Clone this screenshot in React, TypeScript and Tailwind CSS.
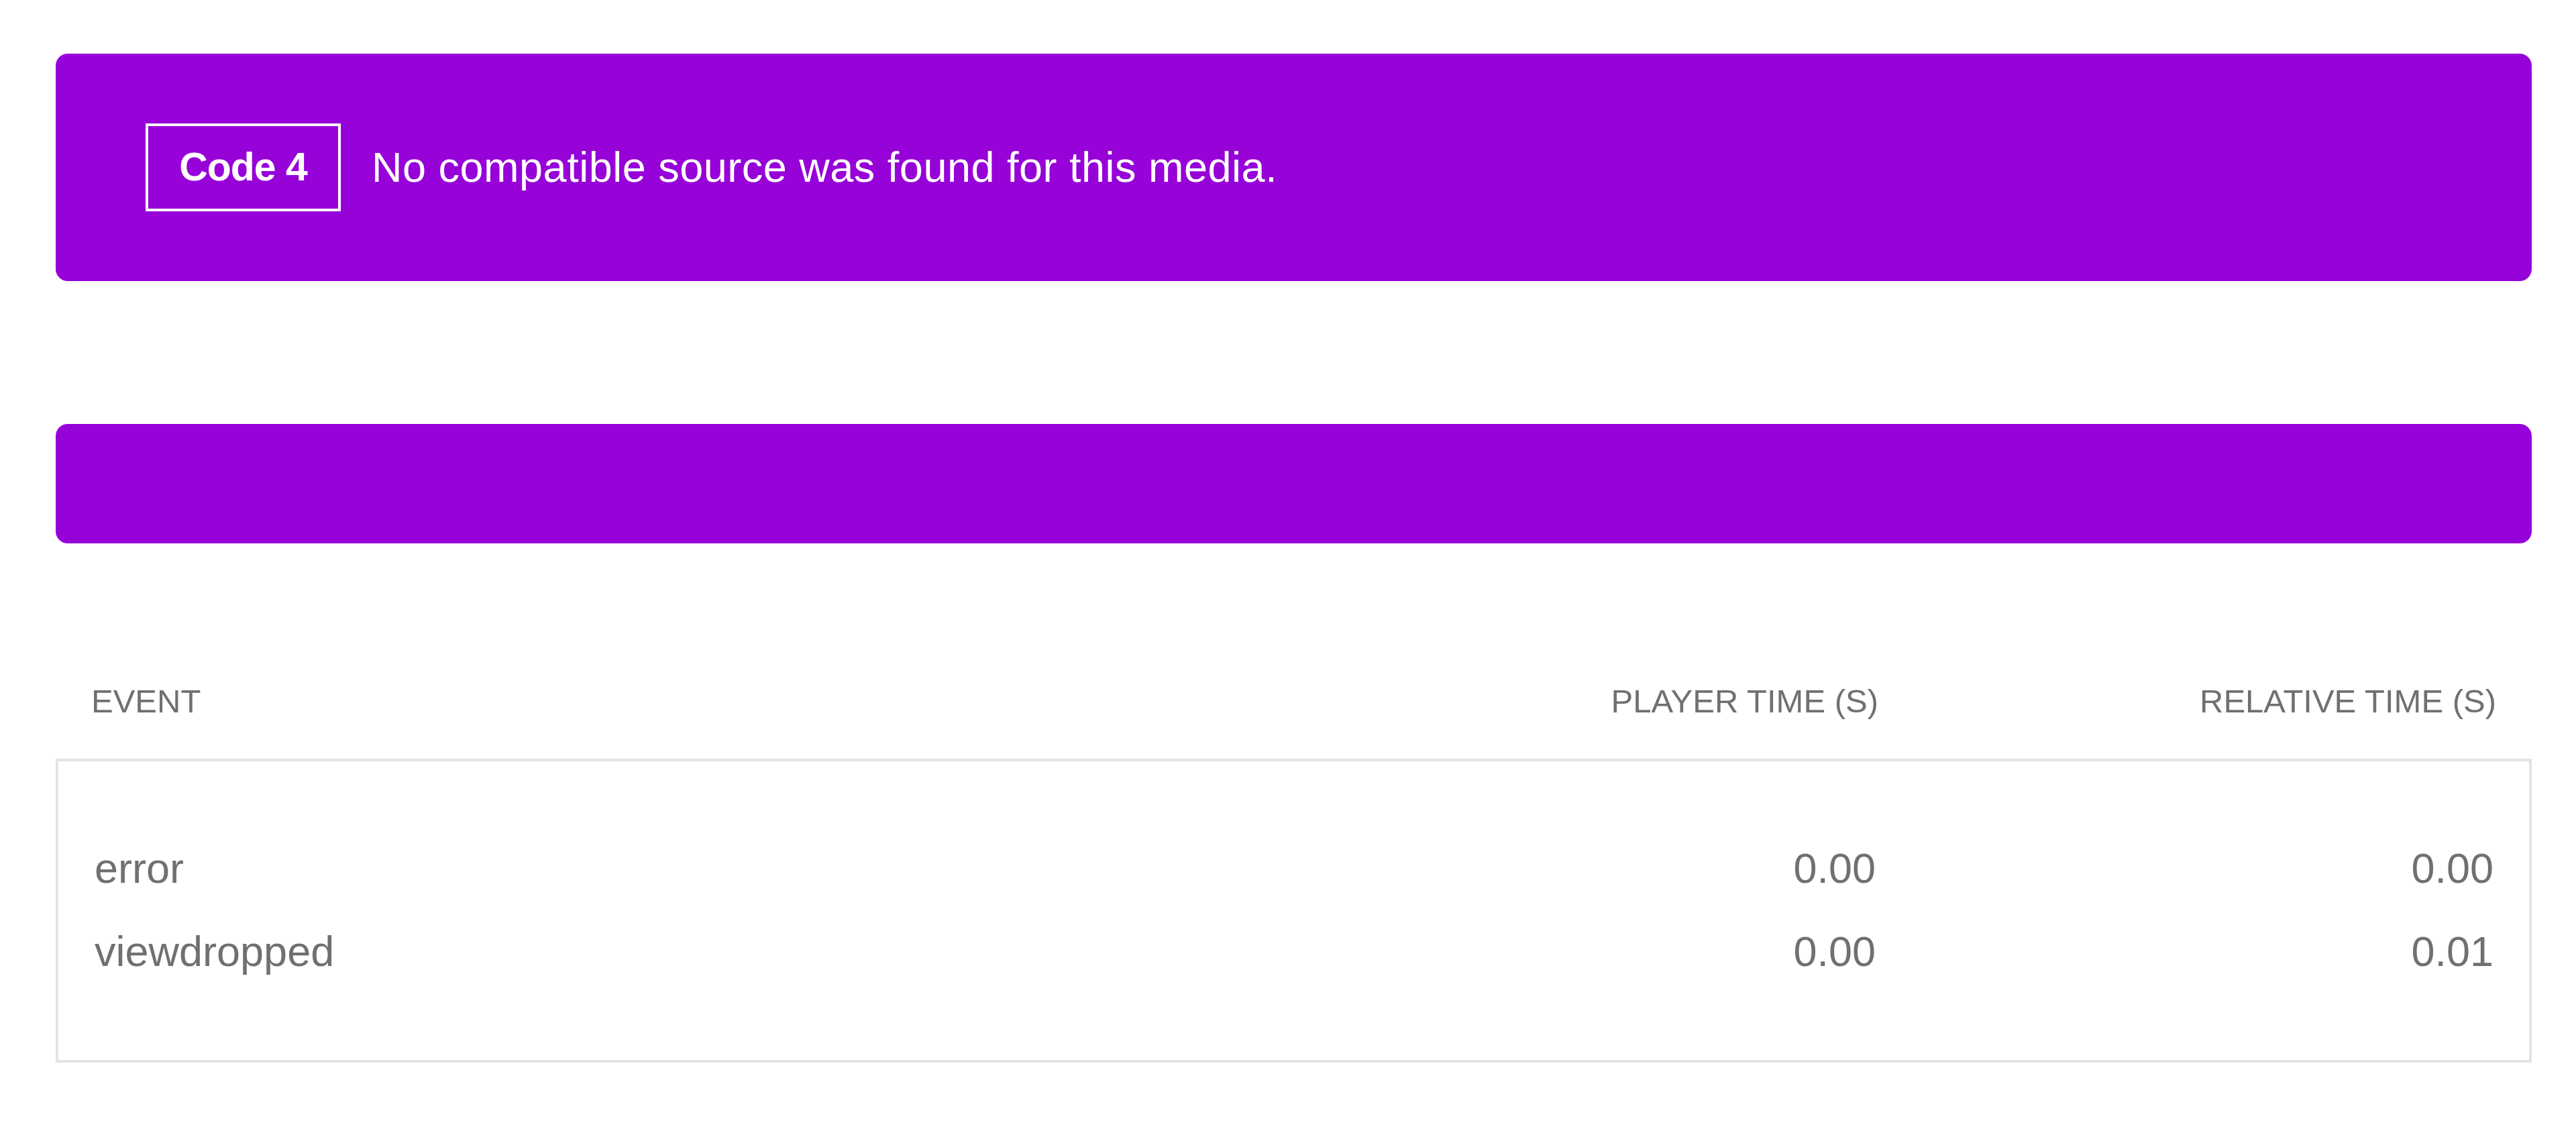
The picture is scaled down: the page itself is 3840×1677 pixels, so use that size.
import React from "react";

const rows = [
  { event: "error", player: "0.00", relative: "0.00" },
  { event: "viewdropped", player: "0.00", relative: "0.01" },
];

export default function App() {
  return (
    <div className="min-h-screen bg-white pt-[80px] pl-[83px] pr-[66px] font-['Liberation_Sans',Arial,sans-serif]">
      <div className="flex h-[339px] items-center rounded-[18px] bg-[#9602d8] pl-[134px]">
        <div className="flex h-[131px] w-[291px] items-center justify-center border-4 border-white text-[59px] font-bold tracking-[-1px] text-white">
          Code 4
        </div>
        <div className="ml-[46px] text-[63px] tracking-[0.5px] text-white">
          No compatible source was found for this media.
        </div>
      </div>

      <div className="mt-[213px] h-[178px] rounded-[18px] bg-[#9602d8]" />

      <div className="mt-[149px] grid h-[172px] grid-cols-[1fr_600px_921px] items-center pl-[53px] pr-[53px] text-[49px] leading-none text-[#707070]">
        <div>EVENT</div>
        <div className="text-right">PLAYER TIME (S)</div>
        <div className="text-right">RELATIVE TIME (S)</div>
      </div>

      <div className="border-4 border-[#e3e3e3] pt-[97px] pb-[100px] pl-[54px] pr-[53px] text-[63px] text-[#707070]">
        {rows.map((r) => (
          <div
            key={r.event}
            className="grid h-[124px] grid-cols-[1fr_600px_921px] items-center"
          >
            <div>{r.event}</div>
            <div className="text-right">{r.player}</div>
            <div className="text-right">{r.relative}</div>
          </div>
        ))}
      </div>
    </div>
  );
}
